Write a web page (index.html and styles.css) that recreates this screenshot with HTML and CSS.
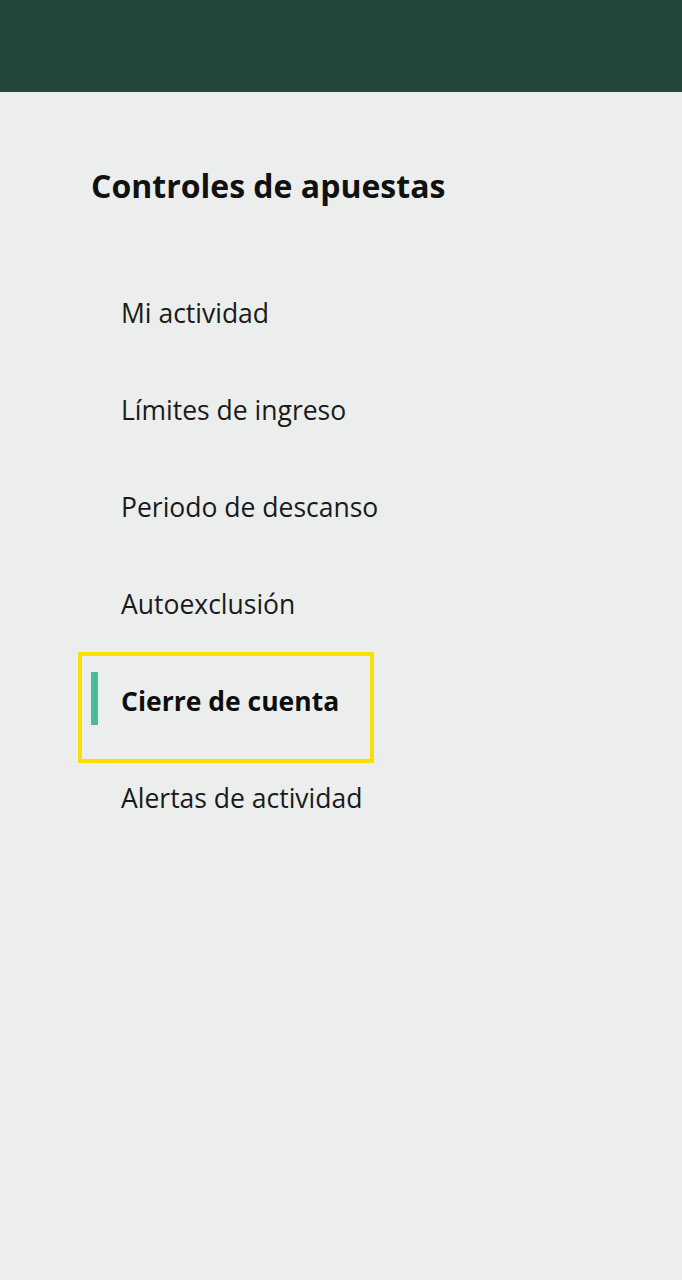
FILE: index.html
```html
<!DOCTYPE html>
<html lang="es">
<head>
<meta charset="utf-8">
<link rel="stylesheet" href="styles.css">
</head>
<body>
<header class="topbar"></header>
<main class="content">
  <h1 class="title">Controles de apuestas</h1>
  <nav class="menu">
    <a class="item">Mi actividad</a>
    <a class="item">Límites de ingreso</a>
    <a class="item">Periodo de descanso</a>
    <a class="item">Autoexclusión</a>
    <a class="item active">Cierre de cuenta<span class="highlight"></span></a>
    <a class="item">Alertas de actividad</a>
  </nav>
</main>
</body>
</html>
```
FILE: styles.css
```css
html, body {
  margin: 0;
  padding: 0;
}
body {
  width: 682px;
  height: 1280px;
  background: #eceeed;
  font-family: "Open Sans", "Noto Sans", sans-serif;
  color: #111;
  overflow: hidden;
}
.topbar {
  height: 92px;
  background: #23473b;
}
.content {
  padding: 0 0 0 91px;
}
.title {
  margin: 0;
  padding-top: 70px;
  font-size: 32px;
  line-height: 48px;
  font-weight: 700;
  letter-spacing: 0;
  color: #111;
}
.menu {
  display: flex;
  flex-direction: column;
  margin-top: 54px;
}
.item {
  position: relative;
  display: flex;
  align-items: center;
  height: 97px;
  padding-left: 30px;
  font-size: 26.5px;
  color: #1a1a1a;
}
.item.active {
  font-weight: 700;
  color: #0d0d0d;
}
.item.active::before {
  content: "";
  position: absolute;
  left: 0;
  top: 20px;
  width: 7px;
  height: 53px;
  background: #48bd9d;
}
.highlight {
  position: absolute;
  left: -13px;
  top: 0;
  width: 288px;
  height: 103px;
  border: 4px solid #f8e100;
  pointer-events: none;
}
```
